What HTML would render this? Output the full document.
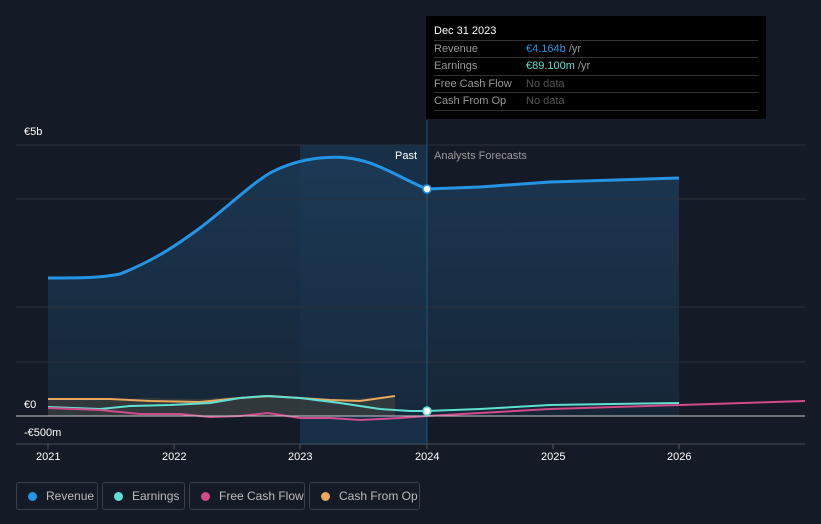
<!DOCTYPE html>
<html><head><meta charset="utf-8"><style>
body{margin:0;width:821px;height:524px;background:#151b26;font-family:"Liberation Sans",sans-serif;overflow:hidden;position:relative}
.t{position:absolute;color:#fff;font-size:11px;white-space:nowrap}
.tip{position:absolute;left:426px;top:16px;width:340px;height:103px;background:#000;}
.tip .r{position:absolute;left:8px;width:324px;font-size:11px;color:#999;border-top:1px solid #333;height:17px;line-height:17px;white-space:nowrap}
.leg{position:absolute;top:482px;height:28px;border:1px solid #3a404a;border-radius:3px;color:#bbb;font-size:12px;line-height:27px;box-sizing:border-box;white-space:nowrap;overflow:hidden}
.leg i{display:inline-block;width:9px;height:9px;border-radius:50%;margin:0 9px 0 11px;vertical-align:-1px}
</style></head><body>
<svg width="821" height="524" style="position:absolute;left:0;top:0">
<defs><linearGradient id="g" x1="0" y1="0" x2="0" y2="1"><stop offset="0" stop-color="#1c3b58"/><stop offset="1" stop-color="#17283a"/></linearGradient></defs>
<rect x="300" y="145" width="127" height="300" fill="#173048"/>
<path d="M48,278 C80,278 100,278 120,274 C150,262 170,250 200,228 C230,205 250,185 270,173 C285,165 300,160 320,158 C340,156 355,158 370,163 C390,170 405,180 427,189 L480,187 L550,182 L679,178 L679,416 L48,416Z" fill="url(#g)" opacity="0.85"/>
<g stroke="#2a303b" stroke-width="1"><line x1="16" y1="145" x2="805" y2="145"/><line x1="16" y1="199" x2="805" y2="199"/><line x1="16" y1="307" x2="805" y2="307"/><line x1="16" y1="362" x2="805" y2="362"/><line x1="16" y1="444" x2="805" y2="444" stroke="#444a55"/></g>
<line x1="427" y1="120" x2="427" y2="444" stroke="#1f5576"/>
<path d="M48,398 L110,399 L150,398 L200,399 L250,396 L270,396 L300,398 L350,399 L395,396 L395,416 L48,416Z" fill="#4a4a40" opacity="0.5"/>
<path d="M48,399 L110,399 L150,401 L200,402 L240,398 L270,396 L300,398 L330,400 L360,401 L395,396" stroke="#e8a95c" stroke-width="2" fill="none"/>
<path d="M48,407 L100,409 L130,406 L170,405 L210,403 L240,398 L265,396 L300,398 L340,403 L380,409 L410,411 L427,411 L480,409 L550,405 L679,403" stroke="#5fe0d0" stroke-width="2" fill="none"/>
<path d="M48,408 L100,410 L140,414 L180,414 L210,417 L240,416 L268,413 L300,418 L330,418 L360,420 L400,418 L427,416 L480,413 L550,409 L680,405 L805,401" stroke="#d14a8a" stroke-width="2" fill="none"/>
<line x1="16" y1="416" x2="805" y2="416" stroke="#c8c8c8"/>
<path d="M48,278 C80,278 100,278 120,274 C150,262 170,250 200,228 C230,205 250,185 270,173 C285,165 300,160 320,158 C340,156 355,158 370,163 C390,170 405,180 427,189 L480,187 L550,182 L679,178" stroke="#2494e4" stroke-width="3" fill="none"/>
<circle cx="427" cy="189" r="4" fill="#fff" stroke="#2494e4" stroke-width="1.5"/>
<circle cx="427" cy="411" r="4" fill="#fff" stroke="#5fe0d0" stroke-width="1.5"/>
<g stroke="#555" ><line x1="48" y1="444" x2="48" y2="449"/><line x1="174" y1="444" x2="174" y2="449"/><line x1="300" y1="444" x2="300" y2="449"/><line x1="427" y1="444" x2="427" y2="449"/><line x1="553" y1="444" x2="553" y2="449"/><line x1="679" y1="444" x2="679" y2="449"/></g>
</svg>
<div class="t" style="left:24px;top:126px">€5b</div>
<div class="t" style="left:24px;top:399px">€0</div>
<div class="t" style="left:24px;top:427px">-€500m</div>
<div class="t" style="left:395px;top:150px;color:#fff">Past</div>
<div class="t" style="left:434px;top:150px;color:#999">Analysts Forecasts</div>
<div class="t" style="left:36px;top:451px">2021</div><div class="t" style="left:162px;top:451px">2022</div><div class="t" style="left:288px;top:451px">2023</div><div class="t" style="left:415px;top:451px">2024</div><div class="t" style="left:541px;top:451px">2025</div><div class="t" style="left:667px;top:451px">2026</div>
<div class="tip">
<div style="position:absolute;left:8px;top:9px;color:#fff;font-size:11px">Dec 31 2023</div>
<div class="r" style="top:24px">Revenue<span style="position:absolute;left:92px"><b style="font-weight:normal;color:#2494e4">€4.164b</b> /yr</span></div>
<div class="r" style="top:41px">Earnings<span style="position:absolute;left:92px"><b style="font-weight:normal;color:#5fe0d0">€89.100m</b> /yr</span></div>
<div class="r" style="top:59px">Free Cash Flow<span style="position:absolute;left:92px;color:#555">No data</span></div>
<div class="r" style="top:76px;border-bottom:1px solid #333">Cash From Op<span style="position:absolute;left:92px;color:#555">No data</span></div>
</div>
<div class="leg" style="left:16px;width:82px"><i style="background:#2494e4"></i>Revenue</div>
<div class="leg" style="left:102px;width:83px"><i style="background:#5fe0d0"></i>Earnings</div>
<div class="leg" style="left:189px;width:116px"><i style="background:#d14a8a"></i>Free Cash Flow</div>
<div class="leg" style="left:309px;width:111px"><i style="background:#e8a95c"></i>Cash From Op</div>
</body></html>
